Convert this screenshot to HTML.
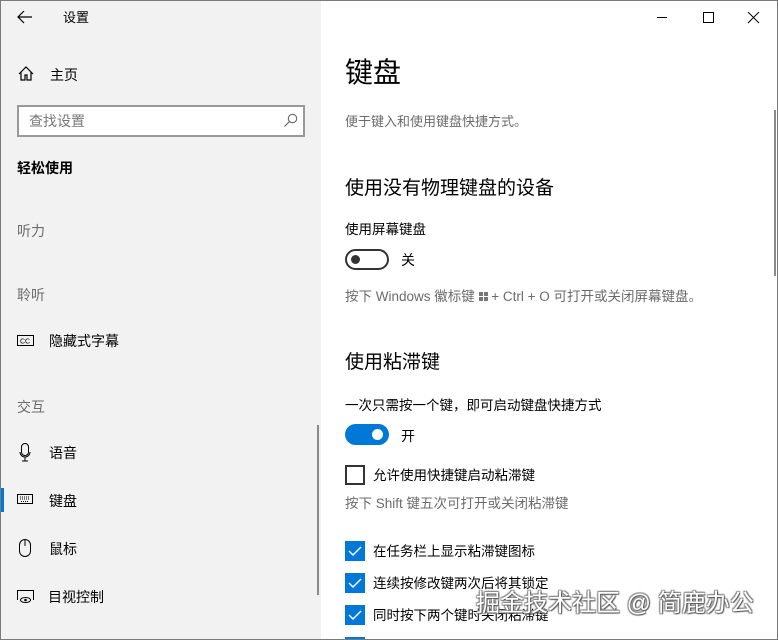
<!DOCTYPE html>
<html><head><meta charset="utf-8"><style>
*{margin:0;padding:0;box-sizing:border-box}
html{width:778px;height:640px;overflow:hidden}
body{width:778px;height:640px;overflow:hidden;background:#fff;font-family:"Liberation Sans","Noto Sans CJK SC",sans-serif;position:relative;color:#000}
.t{position:absolute;white-space:nowrap;line-height:1}
#left{position:absolute;left:0;top:0;width:321px;height:640px;background:#f2f2f2}
#frame{position:absolute;left:0;top:0;width:778px;height:640px;border:1px solid #7a7a7a;pointer-events:none}
.g{color:#6b6b6b}
.tg{position:absolute;width:44px;height:21px;border-radius:11px}
.cb{position:absolute;left:345px;width:20px;height:20px;background:#0078d7}
</style></head><body>
<div id="left">
<svg class="t" style="left:17px;top:10px" width="16" height="14" viewBox="0 0 16 14"><path d="M7 1L1 7l6 6M1 7h14" fill="none" stroke="#000" stroke-width="1.2"/></svg>
<div class="t" style="left:63px;top:11px;font-size:13px">设置</div>
<svg class="t" style="left:18px;top:66px" width="16" height="15" viewBox="0 0 16 15"><path d="M1 8L8 1l7 7M3 6v8h4v-5h2v5h4V6" fill="none" stroke="#000" stroke-width="1.2"/></svg>
<div class="t" style="left:50px;top:68px;font-size:14px">主页</div>
<div style="position:absolute;left:17px;top:105px;width:288px;height:32px;border:2px solid #999;background:#fff"></div>
<div class="t" style="left:29px;top:114px;font-size:14px;color:#777">查找设置</div>
<svg class="t" style="left:283px;top:113px" width="15" height="15" viewBox="0 0 15 15"><circle cx="9.5" cy="5.5" r="4.2" fill="none" stroke="#666" stroke-width="1.1"/><path d="M6.5 8.5L1.5 13.5" stroke="#666" stroke-width="1.2"/></svg>
<div class="t" style="left:17px;top:161px;font-size:14px;font-weight:bold">轻松使用</div>
<div class="t g" style="left:17px;top:224px;font-size:14px">听力</div>
<div class="t g" style="left:17px;top:288px;font-size:14px">聆听</div>
<svg class="t" style="left:17px;top:335px" width="17" height="11" viewBox="0 0 17 11"><rect x=".5" y=".5" width="16" height="10" fill="none" stroke="#000"/><text x="3" y="8.5" font-size="7" font-family="Liberation Sans">CC</text></svg>
<div class="t" style="left:49px;top:334px;font-size:14px">隐藏式字幕</div>
<div class="t g" style="left:17px;top:400px;font-size:14px">交互</div>
<svg class="t" style="left:19px;top:443px" width="12" height="19" viewBox="0 0 12 19"><rect x="2.5" y=".5" width="7" height="12" rx="3.5" fill="none" stroke="#000"/><path d="M1 9a5 5 0 0010 0M6 14v4M3 18h6" fill="none" stroke="#000"/></svg>
<div class="t" style="left:49px;top:446px;font-size:14px">语音</div>
<div style="position:absolute;left:0;top:488px;width:4px;height:24px;background:#0078d7"></div>
<svg class="t" style="left:17px;top:494px" width="16" height="10" viewBox="0 0 16 10"><rect x=".5" y=".5" width="15" height="9" fill="none" stroke="#000"/><path d="M3 3h10M3 5h10M4 7.5h8" stroke="#000" stroke-dasharray="1 1" stroke-width=".9"/></svg>
<div class="t" style="left:49px;top:494px;font-size:14px">键盘</div>
<svg class="t" style="left:19px;top:539px" width="12" height="18" viewBox="0 0 12 18"><rect x=".5" y=".5" width="11" height="17" rx="5.5" fill="none" stroke="#000"/><path d="M6 1v6" stroke="#000"/></svg>
<div class="t" style="left:49px;top:542px;font-size:14px">鼠标</div>
<svg class="t" style="left:17px;top:590px" width="17" height="14" viewBox="0 0 17 14"><path d="M.5 10V.5h16V10" fill="none" stroke="#000"/><ellipse cx="8.5" cy="10" rx="5" ry="2.5" fill="none" stroke="#000"/><circle cx="8.5" cy="10" r="1.3"/></svg>
<div class="t" style="left:48px;top:590px;font-size:14px">目视控制</div>
<div style="position:absolute;left:317px;top:425px;width:2px;height:170px;background:#8a8a8a"></div>
</div>
<svg class="t" style="left:657px;top:12px" width="104" height="12" viewBox="0 0 104 12"><path d="M0 5.5h10" stroke="#000"/><rect x="46.5" y=".5" width="10" height="10" fill="none" stroke="#000"/><path d="M91 0l11 11M102 0L91 11" stroke="#000"/></svg>
<div class="t" style="left:345px;top:59px;font-size:28px">键盘</div>
<div class="t g" style="left:345px;top:115px;font-size:13px">便于键入和使用键盘快捷方式。</div>
<div class="t" style="left:345px;top:179px;font-size:19px">使用没有物理键盘的设备</div>
<div class="t" style="left:345px;top:223px;font-size:13.5px">使用屏幕键盘</div>
<div class="tg" style="left:345px;top:249px;border:2px solid #333"><div style="position:absolute;left:4px;top:4px;width:9px;height:9px;border-radius:50%;background:#333"></div></div>
<div class="t" style="left:401px;top:253px;font-size:14px">关</div>
<div class="t g" style="left:345px;top:290px;font-size:13.5px">按下 Windows 徽标键 <span style="display:inline-block;width:9px;height:9px;background:linear-gradient(#777,#777) 0 0/4px 4px no-repeat,linear-gradient(#777,#777) 5px 0/4px 4px no-repeat,linear-gradient(#777,#777) 0 5px/4px 4px no-repeat,linear-gradient(#777,#777) 5px 5px/4px 4px no-repeat"></span> + Ctrl + O 可打开或关闭屏幕键盘。</div>
<div class="t" style="left:345px;top:353px;font-size:19px">使用粘滞键</div>
<div class="t" style="left:345px;top:399px;font-size:13.5px">一次只需按一个键，即可启动键盘快捷方式</div>
<div class="tg" style="left:345px;top:424px;background:#0078d7"><div style="position:absolute;left:27px;top:5px;width:11px;height:11px;border-radius:50%;background:#fff"></div></div>
<div class="t" style="left:401px;top:429px;font-size:14px">开</div>
<div style="position:absolute;left:345px;top:465px;width:20px;height:20px;border:2px solid #333"></div>
<div class="t" style="left:373px;top:469px;font-size:13.5px">允许使用快捷键启动粘滞键</div>
<div class="t g" style="left:345px;top:497px;font-size:13.5px">按下 Shift 键五次可打开或关闭粘滞键</div>
<div class="cb" style="top:541px"><svg width="20" height="20"><path d="M4 10l4 4 8-8" fill="none" stroke="#fff" stroke-width="1.5"/></svg></div>
<div class="t" style="left:373px;top:545px;font-size:13.5px">在任务栏上显示粘滞键图标</div>
<div class="cb" style="top:573px"><svg width="20" height="20"><path d="M4 10l4 4 8-8" fill="none" stroke="#fff" stroke-width="1.5"/></svg></div>
<div class="t" style="left:373px;top:577px;font-size:13.5px">连续按修改键两次后将其锁定</div>
<div class="cb" style="top:605px"><svg width="20" height="20"><path d="M4 10l4 4 8-8" fill="none" stroke="#fff" stroke-width="1.5"/></svg></div>
<div class="t" style="left:373px;top:609px;font-size:13.5px">同时按下两个键时关闭粘滞键</div>
<div class="cb" style="top:637px;height:3px"></div>
<div class="t" style="left:476px;top:592px;font-size:24px;color:#fff;text-shadow:1px 1px 1px #555,-1px -1px 1px #888,1px -1px 1px #888,-1px 1px 1px #888">掘金技术社区 @ 简鹿办公</div>
<div style="position:absolute;left:774px;top:110px;width:2px;height:166px;background:#8a8a8a"></div>
<div id="frame"></div>
</body></html>
